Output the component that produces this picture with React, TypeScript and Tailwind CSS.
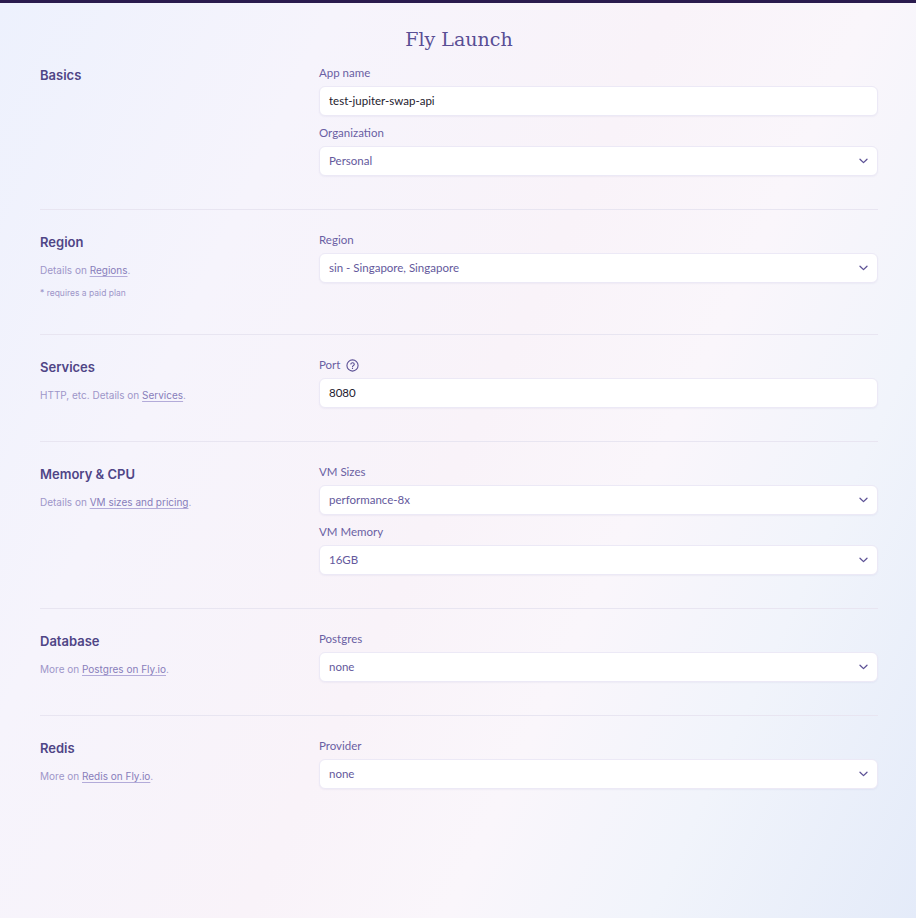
import React from "react";

const ChevronDown = () => (
  <svg width="9" height="6" viewBox="0 0 9 6" fill="none" className="text-[#5d5296]">
    <path d="M1 1.2l3.5 3.4L8 1.2" stroke="currentColor" strokeWidth="1.3" strokeLinecap="round" strokeLinejoin="round" />
  </svg>
);

const HelpIcon = () => (
  <svg width="13" height="13" viewBox="0 0 14 14" fill="none" className="text-[#5d5296]">
    <circle cx="7" cy="7" r="6" stroke="currentColor" strokeWidth="1.2" />
    <path d="M5.2 5.4a1.9 1.9 0 0 1 3.7.4c0 1.2-1.9 1.5-1.9 2.6" stroke="currentColor" strokeWidth="1.2" strokeLinecap="round" />
    <circle cx="7" cy="10.2" r="0.7" fill="currentColor" />
  </svg>
);

const Label = ({ children }: { children: React.ReactNode }) => (
  <div className="flex items-center gap-1.5 h-5 mb-[3px] text-[11.5px] text-[#6a5fa3] font-['Lato',sans-serif]">
    {children}
  </div>
);

const TextInput = ({ value }: { value: string }) => (
  <div className="h-[30px] flex items-center px-[9px] bg-white rounded-md border border-[#ece9f6] shadow-[0_1px_2px_rgba(90,80,150,0.06)] text-[11.5px] text-[#1d1a2e] font-['Lato',sans-serif]">
    {value}
  </div>
);

const Select = ({ value }: { value: string }) => (
  <div className="h-[30px] flex items-center justify-between pl-[9px] pr-[9px] bg-white rounded-md border border-[#ece9f6] shadow-[0_1px_2px_rgba(90,80,150,0.06)] text-[11.5px] text-[#64599c] font-['Lato',sans-serif]">
    <span>{value}</span>
    <ChevronDown />
  </div>
);

const A = ({ children }: { children: React.ReactNode }) => (
  <a className="underline underline-offset-2 decoration-[#b3abd9] text-[#877dba]">{children}</a>
);

const Section = ({
  title,
  desc,
  note,
  children,
  last,
  first,
}: {
  title: string;
  desc?: React.ReactNode;
  note?: string;
  children: React.ReactNode;
  last?: boolean;
  first?: boolean;
}) => (
  <section
    className={`grid grid-cols-[279px_1fr] ${first ? "pt-0" : "pt-[20px]"} pb-[33px] ${last ? "" : "border-b border-[#e8e5f1]"}`}
  >
    <div>
      <h2 className="text-[13px] leading-6 font-semibold text-[#4f4586] font-['Inter',sans-serif]">{title}</h2>
      {desc && (
        <p className="mt-[6px] text-[10px] leading-5 text-[#9e96c9] font-['Inter',sans-serif]">{desc}</p>
      )}
      {note && (
        <p className="mt-[5px] text-[8.5px] leading-4 text-[#9e96c9] font-['Inter',sans-serif]">{note}</p>
      )}
    </div>
    <div className="flex flex-col">{children}</div>
  </section>
);

export default function App() {
  return (
    <div className="min-h-screen border-t-[3px] border-[#2a1b4e] bg-[linear-gradient(115deg,#edf1fd_0%,#f6f4fc_25%,#f9f3f9_50%,#faf6fb_65%,#f1f4fb_80%,#e4ebf9_100%)]">
      <div className="w-[838px] ml-[40px]">
        <h1 className="pt-[24px] pb-[12px] text-center text-[19px] leading-6 text-[#594e95] font-['DejaVu_Serif',serif]">
          Fly Launch
        </h1>
        <Section title="Basics" first>
          <Label>App name</Label>
          <TextInput value="test-jupiter-swap-api" />
          <div className="mt-[7px]">
            <Label>Organization</Label>
            <Select value="Personal" />
          </div>
        </Section>
        <Section
          title="Region"
          desc={
            <>
              Details on <A>Regions</A>.
            </>
          }
          note="* requires a paid plan"
        >
          <Label>Region</Label>
          <Select value="sin - Singapore, Singapore" />
        </Section>
        <Section
          title="Services"
          desc={
            <>
              HTTP, etc. Details on <A>Services</A>.
            </>
          }
        >
          <Label>
            Port <HelpIcon />
          </Label>
          <TextInput value="8080" />
        </Section>
        <Section
          title="Memory & CPU"
          desc={
            <>
              Details on <A>VM sizes and pricing</A>.
            </>
          }
        >
          <Label>VM Sizes</Label>
          <Select value="performance-8x" />
          <div className="mt-[7px]">
            <Label>VM Memory</Label>
            <Select value="16GB" />
          </div>
        </Section>
        <Section
          title="Database"
          desc={
            <>
              More on <A>Postgres on Fly.io</A>.
            </>
          }
        >
          <Label>Postgres</Label>
          <Select value="none" />
        </Section>
        <Section
          title="Redis"
          desc={
            <>
              More on <A>Redis on Fly.io</A>.
            </>
          }
          last
        >
          <Label>Provider</Label>
          <Select value="none" />
        </Section>
      </div>
    </div>
  );
}
